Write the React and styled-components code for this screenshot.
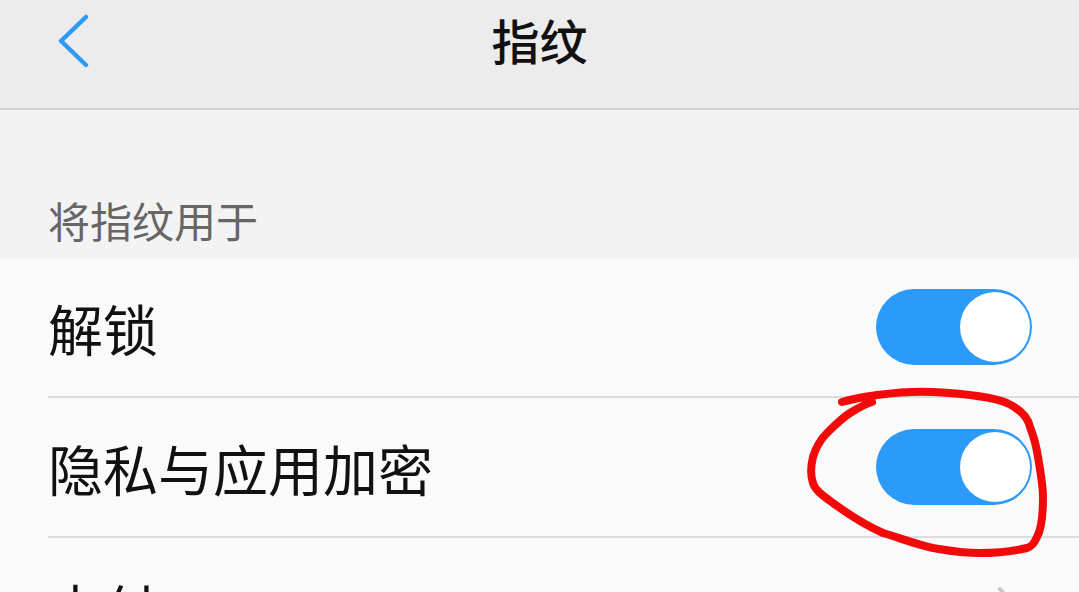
import React from 'react'
import styled, { createGlobalStyle } from 'styled-components'

const Global = createGlobalStyle`
  html, body {
    margin: 0;
    padding: 0;
    background: #fafafa;
  }
  body {
    font-family: "Noto Sans CJK SC", "Noto Sans", sans-serif;
  }
`

const Screen = styled.div`
  position: relative;
  width: 1079px;
  height: 592px;
  overflow: hidden;
  background: #fafafa;
`

const Header = styled.header`
  height: 108px;
  background: #ececec;
  border-bottom: 2px solid #cfcfcf;
  display: flex;
  align-items: center;
  justify-content: center;
  position: relative;
`

const Back = styled.div`
  position: absolute;
  left: 56px;
  top: 12px;
  width: 40px;
  height: 60px;
`

const Title = styled.h1`
  margin: 0 0 30px;
  font-size: 48px;
  font-weight: 500;
  color: #111;
  line-height: 1;
`

const SectionHead = styled.div`
  height: 148px;
  background: #f3f3f3;
  display: flex;
  align-items: flex-end;
  padding: 0 0 17px 48px;
  box-sizing: border-box;
  font-size: 42px;
  color: #666;
  line-height: 1;
`

const List = styled.div`
  background: #fafafa;
  padding-left: 48px;
`

const Row = styled.div`
  height: 138px;
  display: flex;
  align-items: center;
  justify-content: space-between;
  padding-right: 47px;
  border-bottom: ${p => (p.last ? 'none' : '2px solid #dddddd')};
`

const Label = styled.span`
  font-size: 55px;
  color: #111;
  line-height: 1;
`

const Track = styled.div`
  width: 156px;
  height: 76px;
  border-radius: 38px;
  background: #2b9af9;
  display: flex;
  align-items: center;
  justify-content: ${p => (p.on ? 'flex-end' : 'flex-start')};
  padding: 0 2px;
  box-sizing: border-box;
`

const Knob = styled.div`
  width: 70px;
  height: 70px;
  border-radius: 50%;
  background: #fff;
`

const Arrow = styled.div`
  width: 28px;
  height: 48px;
  margin-right: 10px;
`

const Mark = styled.svg`
  position: absolute;
  left: 0;
  top: 0;
  pointer-events: none;
`

const Toggle = ({ on }) => (
  <Track on={on ? 1 : 0}>
    <Knob />
  </Track>
)

export default function App() {
  return (
    <Screen>
      <Global />
      <Header>
        <Back>
          <svg width="40" height="60" viewBox="0 0 40 60">
            <path d="M30 5 L5 29 L30 53" fill="none" stroke="#2b9af9" strokeWidth="4.5" strokeLinecap="round" strokeLinejoin="round" />
          </svg>
        </Back>
        <Title>指纹</Title>
      </Header>
      <SectionHead>将指纹用于</SectionHead>
      <List>
        <Row>
          <Label>解锁</Label>
          <Toggle on />
        </Row>
        <Row>
          <Label>隐私与应用加密</Label>
          <Toggle on />
        </Row>
        <Row last>
          <Label>支付</Label>
          <Arrow>
            <svg width="28" height="48" viewBox="0 0 28 48">
              <path d="M6 6 L22 24 L6 42" fill="none" stroke="#c8c8c8" strokeWidth="4" strokeLinecap="round" strokeLinejoin="round" />
            </svg>
          </Arrow>
        </Row>
      </List>
      <Mark width="1079" height="592" viewBox="0 0 1079 592">
        <path
          d="M842 402 C855 398 870 396 877 395 C900 392 915 391 933 392 C970 394 995 398 1007 403 C1022 410 1028 418 1030 427 C1035 440 1037 450 1038 457 C1041 475 1043 485 1043 497 C1043 515 1041 530 1037 537 C1034 544 1031 547 1027 548 C1010 552 995 553 980 553 C960 553 945 550 933 548 C915 544 900 538 883 533 C865 525 848 514 833 503 C822 495 815 490 813 483 C810 474 811 465 813 457 C816 447 820 440 827 433 C835 425 842 418 850 413 C858 408 865 404 872 402"
          fill="none"
          stroke="#f20a0a"
          strokeWidth="8"
          strokeLinecap="round"
          strokeLinejoin="round"
        />
      </Mark>
    </Screen>
  )
}
